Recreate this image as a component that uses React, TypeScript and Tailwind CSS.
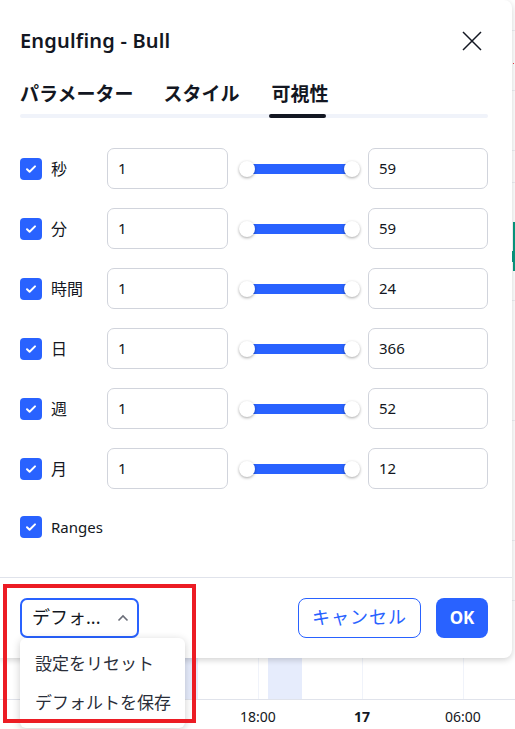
import React from "react";

type Row = { label: string; from: string; to: string };

const ROWS: Row[] = [
  { label: "秒", from: "1", to: "59" },
  { label: "分", from: "1", to: "59" },
  { label: "時間", from: "1", to: "24" },
  { label: "日", from: "1", to: "366" },
  { label: "週", from: "1", to: "52" },
  { label: "月", from: "1", to: "12" },
];

const FONT = { fontFamily: '"Noto Sans", "Noto Sans CJK JP", sans-serif' };

function CheckBox() {
  return (
    <span className="flex h-[22px] w-[22px] shrink-0 items-center justify-center rounded-[4px] bg-[#2962ff]">
      <svg width="14" height="14" viewBox="0 0 14 14" fill="none">
        <path d="M3 7.3l2.6 2.5L11 4.4" stroke="white" strokeWidth="2" strokeLinecap="round" strokeLinejoin="round" />
      </svg>
    </span>
  );
}

function RangeSlider() {
  return (
    <div className="relative h-[40px] w-[121px] shrink-0">
      <div className="absolute left-[8px] right-[8px] top-[15px] h-[10px] bg-[#2962ff]" />
      <span className="absolute left-0 top-[12px] h-[16px] w-[16px] rounded-full bg-white shadow-[0_1px_3px_rgba(0,0,0,0.35)]" />
      <span className="absolute right-0 top-[12px] h-[16px] w-[16px] rounded-full bg-white shadow-[0_1px_3px_rgba(0,0,0,0.35)]" />
    </div>
  );
}

function NumberBox({ value, width }: { value: string; width: string }) {
  return (
    <div className={`flex h-[41px] ${width} shrink-0 items-center rounded-[7px] border border-[#d1d4dc] bg-white pl-[10px] text-[15px] text-[#131722]`}>
      {value}
    </div>
  );
}

function ChartBackdrop() {
  return (
    <div className="absolute inset-0 bg-white">
      {/* grid */}
      <div className="absolute left-0 right-0 top-[699px] h-px bg-[#e0e3eb]" />
      <div className="absolute bottom-[30px] left-[258px] top-0 w-px bg-[#f0f3fa]" />
      <div className="absolute bottom-[30px] left-[362px] top-0 w-px bg-[#f0f3fa]" />
      <div className="absolute bottom-[30px] left-[463px] top-0 w-px bg-[#f0f3fa]" />
      {[30, 90, 150, 182, 300, 420, 540, 600].map((y) => (
        <div key={y} className="absolute left-[510px] right-0 h-px bg-[#eef0f4]" style={{ top: y }} />
      ))}
      {/* session highlights */}
      <div className="absolute left-[164px] top-[640px] h-[59px] w-[34px] bg-[#e6ecfc]" />
      <div className="absolute left-[268px] top-[640px] h-[59px] w-[34px] bg-[#e6ecfc]" />
      {/* candle peeking out at the edge */}
      <div className="absolute left-[513px] top-[222px] h-[49px] w-[2px] bg-[#089981]" />
      <div className="absolute left-[512px] top-[251px] h-[11px] w-[3px] bg-[#089981]" />
      <div className="absolute left-[513px] top-[63px] h-px w-px bg-[#f23645]" />
      {/* time axis */}
      <div className="absolute left-[238px] top-[706px] w-[40px] text-center text-[14px] text-[#131722]">18:00</div>
      <div className="absolute left-[342px] top-[706px] w-[40px] text-center text-[14px] font-bold text-[#131722]">17</div>
      <div className="absolute left-[443px] top-[706px] w-[40px] text-center text-[14px] text-[#131722]">06:00</div>
    </div>
  );
}

export default function App() {
  return (
    <div className="relative h-[729px] w-[515px] overflow-hidden bg-white" style={FONT}>
      <ChartBackdrop />

      <div className="absolute left-0 top-0 flex w-[512px] flex-col rounded-r-[8px] bg-white shadow-[0_2px_6px_rgba(0,0,0,0.18)]">
        <div className="flex h-[80px] items-center justify-between pl-5 pr-[30px] pt-[2px]">
          <h1 className="text-[20px] font-semibold tracking-[0.2px] text-[#131722]">Engulfing - Bull</h1>
          <svg width="20" height="20" viewBox="0 0 20 20" fill="none">
            <path d="M1 1l18 18M19 1L1 19" stroke="#131722" strokeWidth="1.5" />
          </svg>
        </div>

        <div className="mx-5 mr-6">
          <div className="flex h-[32px] items-start whitespace-nowrap text-[19px] font-bold leading-[28px] text-[#131722]">
            <span className="shrink-0">パラメーター</span>
            <span className="ml-[30px] shrink-0">スタイル</span>
            <span className="ml-[32px] shrink-0">可視性</span>
          </div>
          <div className="relative mt-[2px] h-[4px] rounded-full bg-[#f0f3fa]">
            <div className="absolute left-[249px] top-0 h-[4px] w-[57px] rounded-full bg-[#131722]" />
          </div>
        </div>

        <div className="flex flex-col gap-[19px] pl-5 pr-6 pt-[30px]">
          {ROWS.map((r) => (
            <div key={r.label} className="flex items-center">
              <div className="flex w-[88px] items-center gap-[9px] text-[16px] text-[#131722]">
                <CheckBox />
                <span>{r.label}</span>
              </div>
              <NumberBox value={r.from} width="w-[121px]" />
              <div className="ml-[11px]">
                <RangeSlider />
              </div>
              <div className="ml-[8px]">
                <NumberBox value={r.to} width="w-[120px]" />
              </div>
            </div>
          ))}
          <div className="mt-[8px] flex items-center gap-[9px] text-[15px] text-[#131722]">
            <CheckBox />
            <span>Ranges</span>
          </div>
        </div>

        <div className="mt-[38px] flex items-center justify-between border-t border-[#e0e3eb] py-5 pl-5 pr-6">
          <div className="flex h-[40px] w-[119px] items-center justify-between rounded-[7px] border-2 border-[#2962ff] pl-[10px] pr-[8px] text-[18px] text-[#131722]">
            <span>デフォ...</span>
            <svg width="12" height="8" viewBox="0 0 12 8" fill="none">
              <path d="M1.5 6.5L6 2l4.5 4.5" stroke="#6a6d78" strokeWidth="1.6" />
            </svg>
          </div>
          <div className="flex items-center gap-[15px]">
            <button className="h-[40px] w-[123px] rounded-[8px] border border-[#2962ff] text-[18px] tracking-[1px] text-[#2962ff]">
              キャンセル
            </button>
            <button className="h-[40px] w-[52px] rounded-[8px] bg-[#2962ff] text-[17px] font-bold text-white">
              OK
            </button>
          </div>
        </div>
      </div>

      {/* open preset menu */}
      <div className="absolute left-[20px] top-[638px] w-[165px] rounded-[6px] bg-white py-[6px] text-[17px] text-[#2a2e39] shadow-[0_2px_8px_rgba(0,0,0,0.2)]">
        <div className="flex h-[39px] items-center pl-[15px]">設定をリセット</div>
        <div className="flex h-[39px] items-center pl-[15px]">デフォルトを保存</div>
      </div>

      <div className="absolute left-[3px] top-[584px] h-[139px] w-[193px] border-4 border-[#ec1c24]" />
    </div>
  );
}
